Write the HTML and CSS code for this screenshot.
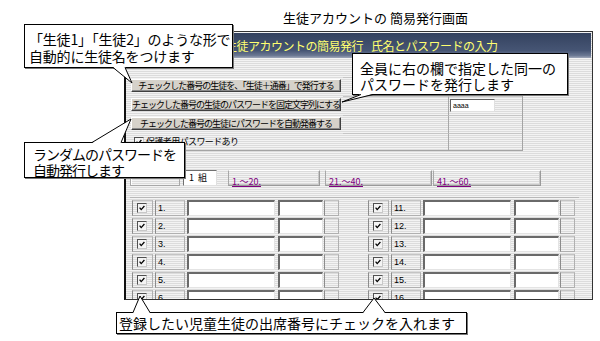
FILE: index.html
```html
<!DOCTYPE html>
<html lang="ja">
<head>
<meta charset="utf-8">
<link rel="stylesheet" href="styles.css">
</head>
<body>
<div class="title">生徒アカウントの 簡易発行画面</div>
<div class="window">
  <div class="header">生徒アカウントの簡易発行<span class="gap">氏名とパスワードの入力</span></div>
  <div class="tools">
    <div class="bcell"><div class="btn">チェックした番号の生徒を、「生徒＋通番」で発行する</div></div>
    <div class="mid"></div>
    <div class="rgt"></div>
    <div class="bcell"><div class="btn">チェックした番号の生徒のパスワードを固定文字列にする</div></div>
    <div class="mid"></div>
    <div class="rgt"><div class="pw">aaaa</div></div>
    <div class="bcell"><div class="btn">チェックした番号の生徒にパスワードを自動発番する</div></div>
    <div class="mid"></div>
    <div class="rgt"></div>
    <div class="bcell opt"><span class="chk"><svg viewBox="0 0 10 10"><path d="M2 4.5 L4 7 L8 2.5" fill="none" stroke="#000" stroke-width="1.6"/></svg></span><span>保護者用パスワードあり</span></div>
    <div class="mid"></div>
    <div class="rgt"></div>
  </div>
  <div class="classrow">
    <div class="cella"></div>
    <div class="kumi">1&nbsp;&nbsp;組</div>
    <div class="lbox l1"><span class="lnk">1.～20.</span></div>
    <div class="lbox l2"><span class="lnk">21.～40.</span></div>
    <div class="lbox l3"><span class="lnk">41.～60.</span></div>
  </div>
  <div class="grid">
    <div class="row">
      <div class="cb"><span class="chk"><svg viewBox="0 0 10 10"><path d="M2 4.5 L4 7 L8 2.5" fill="none" stroke="#000" stroke-width="1.6"/></svg></span></div><div class="num">1.</div><div class="inp name"></div><div class="inp pass"></div><div class="ex"></div>
      <div class="cb right"><span class="chk"><svg viewBox="0 0 10 10"><path d="M2 4.5 L4 7 L8 2.5" fill="none" stroke="#000" stroke-width="1.6"/></svg></span></div><div class="num">11.</div><div class="inp name"></div><div class="inp pass"></div><div class="ex"></div>
    </div>
    <div class="row">
      <div class="cb"><span class="chk"><svg viewBox="0 0 10 10"><path d="M2 4.5 L4 7 L8 2.5" fill="none" stroke="#000" stroke-width="1.6"/></svg></span></div><div class="num">2.</div><div class="inp name"></div><div class="inp pass"></div><div class="ex"></div>
      <div class="cb right"><span class="chk"><svg viewBox="0 0 10 10"><path d="M2 4.5 L4 7 L8 2.5" fill="none" stroke="#000" stroke-width="1.6"/></svg></span></div><div class="num">12.</div><div class="inp name"></div><div class="inp pass"></div><div class="ex"></div>
    </div>
    <div class="row">
      <div class="cb"><span class="chk"><svg viewBox="0 0 10 10"><path d="M2 4.5 L4 7 L8 2.5" fill="none" stroke="#000" stroke-width="1.6"/></svg></span></div><div class="num">3.</div><div class="inp name"></div><div class="inp pass"></div><div class="ex"></div>
      <div class="cb right"><span class="chk"><svg viewBox="0 0 10 10"><path d="M2 4.5 L4 7 L8 2.5" fill="none" stroke="#000" stroke-width="1.6"/></svg></span></div><div class="num">13.</div><div class="inp name"></div><div class="inp pass"></div><div class="ex"></div>
    </div>
    <div class="row">
      <div class="cb"><span class="chk"><svg viewBox="0 0 10 10"><path d="M2 4.5 L4 7 L8 2.5" fill="none" stroke="#000" stroke-width="1.6"/></svg></span></div><div class="num">4.</div><div class="inp name"></div><div class="inp pass"></div><div class="ex"></div>
      <div class="cb right"><span class="chk"><svg viewBox="0 0 10 10"><path d="M2 4.5 L4 7 L8 2.5" fill="none" stroke="#000" stroke-width="1.6"/></svg></span></div><div class="num">14.</div><div class="inp name"></div><div class="inp pass"></div><div class="ex"></div>
    </div>
    <div class="row">
      <div class="cb"><span class="chk"><svg viewBox="0 0 10 10"><path d="M2 4.5 L4 7 L8 2.5" fill="none" stroke="#000" stroke-width="1.6"/></svg></span></div><div class="num">5.</div><div class="inp name"></div><div class="inp pass"></div><div class="ex"></div>
      <div class="cb right"><span class="chk"><svg viewBox="0 0 10 10"><path d="M2 4.5 L4 7 L8 2.5" fill="none" stroke="#000" stroke-width="1.6"/></svg></span></div><div class="num">15.</div><div class="inp name"></div><div class="inp pass"></div><div class="ex"></div>
    </div>
    <div class="row">
      <div class="cb"><span class="chk"><svg viewBox="0 0 10 10"><path d="M2 4.5 L4 7 L8 2.5" fill="none" stroke="#000" stroke-width="1.6"/></svg></span></div><div class="num">6.</div><div class="inp name"></div><div class="inp pass"></div><div class="ex"></div>
      <div class="cb right"><span class="chk"><svg viewBox="0 0 10 10"><path d="M2 4.5 L4 7 L8 2.5" fill="none" stroke="#000" stroke-width="1.6"/></svg></span></div><div class="num">16.</div><div class="inp name"></div><div class="inp pass"></div><div class="ex"></div>
    </div>
  </div>
</div>

<div class="callout c1">「生徒1」「生徒2」のような形で<br>自動的に生徒名をつけます</div>
<div class="callout c2">全員に右の欄で指定した同一の<br>パスワードを発行します</div>
<div class="callout c3">ランダムのパスワードを<br>自動発行します</div>
<div class="callout c4">登録したい児童生徒の出席番号にチェックを入れます</div>

<svg class="tails" width="600" height="341" viewBox="0 0 600 341">
  <polygon points="113,67 132,83 125,67" fill="#fff"/>
  <polyline points="113,67.5 132,83 125,67.5" fill="none" stroke="#000" stroke-width="1"/>
  <polygon points="361,94 342,102 373,94" fill="#fff"/>
  <polyline points="361,94.5 342,102 373,94.5" fill="none" stroke="#000" stroke-width="1"/>
  <polygon points="92,143 131,119 121,143" fill="#fff"/>
  <polyline points="92,142.5 131,119 121,142.5" fill="none" stroke="#000" stroke-width="1"/>
  <polygon points="133,313 140,296 150,313" fill="#fff"/>
  <polyline points="133,312.5 140,296 150,312.5" fill="none" stroke="#000" stroke-width="1"/>
  <polygon points="363,313 374,298 385,313" fill="#fff"/>
  <polyline points="363,312.5 374,298 385,312.5" fill="none" stroke="#000" stroke-width="1"/>
</svg>
</body>
</html>
```
FILE: styles.css
```css
* { box-sizing: border-box; }
body {
  margin: 0;
  width: 600px;
  height: 341px;
  overflow: hidden;
  position: relative;
  background: #fff;
  font-family: "Noto Sans CJK JP", "Liberation Sans", sans-serif;
  color: #000;
}
.title {
  padding: 11px 0 0 283px;
  height: 31px;
  font-size: 13px;
  line-height: 13px;
  white-space: nowrap;
}
.window {
  margin-left: 124px;
  width: 469px;
  height: 269px;
  border: 1px solid #333;
  border-left: 2px solid #111;
  overflow: hidden;
  background: repeating-linear-gradient(to bottom, #f3f3f3 0 1px, #dcdcdc 1px 2px);
}
.header {
  margin: 1px 1px 0 1px;
  height: 25px;
  background: linear-gradient(to bottom, #34425f 0%, #465574 70%, #6b7893 90%, #a0a8ba 100%);
  color: #ffff70;
  font-size: 12px;
  letter-spacing: -0.5px;
  line-height: 25px;
  padding-left: 98px;
  white-space: nowrap;
}
.gap { margin-left: 8px; }
.tools {
  margin: 19px 0 0 2px;
  width: 395px;
  display: grid;
  grid-template-columns: 215px 105px 74px;
  grid-template-rows: 19px 19px 18px 17px;
  border-right: 1px solid #a4a4a4;
  border-bottom: 1px solid #a4a4a4;
}
.bcell { padding: 2px 0 0 3px; }
.btn {
  width: 210px;
  height: 13px;
  background: #d6d2ca;
  border: 1px solid;
  border-color: #fff #404040 #404040 #fff;
  box-shadow: inset -1px -1px 0 #8a8a8a;
  font-size: 9px;
  letter-spacing: -1px;
  line-height: 11px;
  text-align: center;
  white-space: nowrap;
  overflow: hidden;
}
.opt {
  display: flex;
  align-items: center;
  gap: 2px;
  padding: 0 0 0 6px;
  font-size: 9px;
  letter-spacing: -0.6px;
  white-space: nowrap;
}
.mid { border-top: 1px solid #c6c6c6; }
.rgt { border-top: 1px solid #c6c6c6; border-left: 1px solid #a8a8a8; padding: 2px 0 0 1px; }
.pw {
  width: 45px;
  height: 13px;
  background: #fff;
  border-style: solid;
  border-width: 1px;
  border-color: #606060 #e0e0e0 #e0e0e0 #606060;
  font-size: 7px;
  line-height: 11px;
  padding-left: 2px;
  font-family: "Liberation Sans", sans-serif;
}
.chk {
  display: block;
  width: 10px;
  height: 10px;
  background: #f4f4f4;
  border: 1px solid;
  border-color: #505050 #c8c8c8 #c8c8c8 #505050;
  flex: none;
}
.chk svg { display: block; width: 8px; height: 8px; }
.classrow {
  margin: 19px 0 0 4px;
  display: flex;
  height: 16px;
}
.cella { width: 50px; border: 1px solid #a8a8a8; box-shadow: inset 1px 1px 0 #fff; }
.kumi {
  margin-left: 3px;
  width: 34px;
  background: #fff;
  border-style: solid;
  border-width: 1px;
  border-color: #707070 #e0e0e0 #e0e0e0 #707070;
  font-size: 9px;
  line-height: 14px;
  padding-left: 5px;
  white-space: nowrap;
}
.lbox {
  border: 1px solid;
  border-color: #fff #9a9a9a #9a9a9a #a8a8a8;
  box-shadow: inset -1px -1px 0 #c8c8c8;
  padding-left: 3px;
  line-height: 14px;
}
.l1 { margin-left: 11px; width: 92px; }
.l2 { margin-left: 5px; width: 107px; }
.l3 { margin-left: 1px; width: 108px; }
.lnk {
  color: #800080;
  text-decoration: underline;
  font-size: 9px;
  font-family: "Noto Sans CJK JP", sans-serif;
  white-space: nowrap;
}
.grid {
  margin: 11px 0 0 4px;
  width: 449px;
  border-top: 1px solid #b8b8b8;
  padding: 2px 0 0 2px;
}
.row {
  display: flex;
  height: 16px;
  margin-bottom: 2px;
}
.cb, .num, .ex {
  border: 1px solid;
  border-color: #c4c4c4 #b0b0b0 #b0b0b0 #8c8c8c;
}
.cb { width: 21px; padding: 2px 0 0 4px; }
.cb.right { margin-left: 29px; }
.num {
  margin-left: 2px;
  width: 30px;
  font-family: "Liberation Sans", sans-serif;
  font-size: 9px;
  line-height: 14px;
  padding-left: 2px;
}
.inp {
  background: #fff;
  border-style: solid;
  border-width: 2px 1px 1px 2px;
  border-color: #6a6a6a #e4e4e4 #e4e4e4 #6a6a6a;
}
.name { margin-left: 2px; width: 88px; }
.pass { margin-left: 3px; width: 45px; }
.ex { margin-left: 1px; width: 15px; }
.callout {
  position: absolute;
  z-index: 2;
  background: #fff;
  border: 1px solid #000;
  box-shadow: 1px 1px 0 #777;
  font-size: 14px;
  white-space: nowrap;
}
.c1 { left: 24px; top: 24px; width: 209px; height: 44px; line-height: 17px; padding: 6px 0 0 4px; letter-spacing: -0.2px; }
.c2 { left: 352px; top: 53px; width: 216px; height: 42px; line-height: 16px; padding: 6px 0 0 7px; }
.c3 { left: 24px; top: 142px; width: 161px; height: 36px; line-height: 16px; padding: 3px 0 0 8px; letter-spacing: -1px; }
.c4 { left: 116px; top: 312px; width: 351px; height: 22px; line-height: 18px; padding: 1px 0 0 2px; }
.tails { position: absolute; left: 0; top: 0; z-index: 3; pointer-events: none; }
```
